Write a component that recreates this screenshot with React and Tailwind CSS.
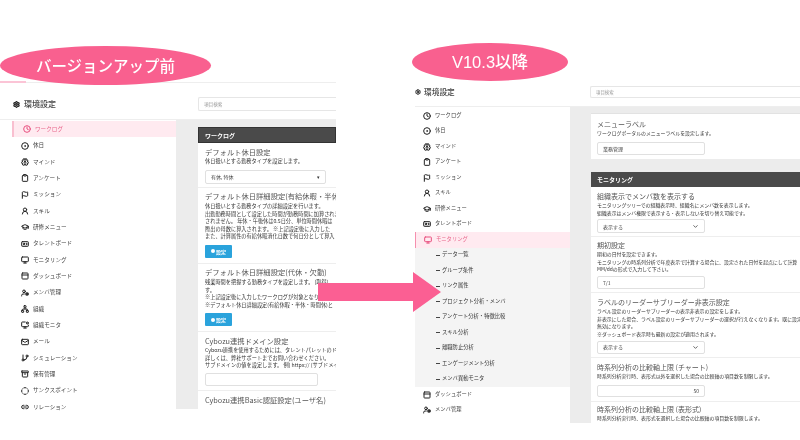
import React from "react";
import { Clock, CircleDot, Brain, Clipboard, Flag, UserRound, GraduationCap, IdCard, Monitor, PanelTop, UserCog, Network, MonitorDot, Mail, GitBranch, Archive, CircleDashed, Link2, Settings, ChevronDown } from "lucide-react";

const font = { fontFamily: '"Noto Sans CJK JP","Noto Sans",sans-serif' };

const items = [
  ["ワークログ", Clock],
  ["休日", CircleDot],
  ["マインド", Brain],
  ["アンケート", Clipboard],
  ["ミッション", Flag],
  ["スキル", UserRound],
  ["研修メニュー", GraduationCap],
  ["タレントボード", IdCard],
  ["モニタリング", Monitor],
  ["ダッシュボード", PanelTop],
  ["メンバ管理", UserCog],
  ["組織", Network],
  ["組織モニタ", MonitorDot],
  ["メール", Mail],
  ["シミュレーション", GitBranch],
  ["保有管理", Archive],
  ["サンクスポイント", CircleDashed],
  ["リレーション", Link2],
];

const subs = ["データ一覧", "グループ条件", "リンク属性", "プロジェクト分析・メンバ", "アンケート分析・特徴比較", "スキル分析", "離職防止分析", "エンゲージメント分析", "メンバ異動モニタ"];

function Title({ children, className = "" }) {
  return <div className={`text-[#555] whitespace-nowrap ${className}`}>{children}</div>;
}

function Desc({ lines, className = "" }) {
  return (
    <div className={`text-[#333] whitespace-nowrap ${className}`}>
      {lines.map((l) => <div key={l}>{l}</div>)}
    </div>
  );
}

function Field({ text = "", select, chevron, right, className = "" }) {
  return (
    <div className={`border border-[#e0e0e0] rounded-[2px] bg-white flex items-center px-[5px] text-[#444] text-[5px] ${className}`}>
      <span className={right ? "ml-auto" : ""}>{text}</span>
      {select && <span className="ml-auto text-[#333] text-[5px]">▾</span>}
      {chevron && <ChevronDown size={7} strokeWidth={3} className="ml-auto text-[#555]" />}
    </div>
  );
}

function SetBtn() {
  return (
    <div className="w-[27px] h-[13px] bg-[#2aa3dc] rounded-[1px] flex items-center justify-center gap-[1px] text-white text-[5px] font-bold">
      <span className="w-[4px] h-[4px] rounded-full bg-white" />設定
    </div>
  );
}

function LeftSidebar() {
  return (
    <div className="w-[176px] shrink-0 pt-[1px] pl-[12px]">
      {items.map(([t, I], i) => (
        <div key={t} className={`h-[16.35px] flex items-center text-[5.6px] pl-[9px] gap-[4px] ${i === 0 ? "bg-[#ffeaf0] border-l-2 border-[#f9bfd0] pl-[7px] text-[#e8678c]" : "text-[#444]"}`}>
          <I size={8} strokeWidth={3} className={i === 0 ? "text-[#e8507f]" : "text-[#222]"} />
          <span>{t}</span>
        </div>
      ))}
    </div>
  );
}

function RightSidebar() {
  const row = (t, I, active) => (
    <div key={t} className={`h-[15.5px] flex items-center text-[5.3px] pl-[8px] gap-[4px] ${active ? "bg-[#ffeaf0] border-l border-[#f58fae] pl-[7px] text-[#e8678c]" : "text-[#444]"}`}>
      <I size={8} strokeWidth={3} className={active ? "text-[#e8507f]" : "text-[#222]"} />
      <span>{t}</span>
    </div>
  );
  return (
    <div className="w-[155px] shrink-0 pt-[1px]">
      {items.slice(0, 8).map(([t, I]) => row(t, I))}
      {row(items[8][0], items[8][1], true)}
      <div className="bg-[#f4f4f4]">
        {subs.map((s) => (
          <div key={s} className="h-[15.5px] flex items-center pl-[21px] gap-[2px] text-[5.3px] text-[#333]">
            <span className="w-[4px] h-[1px] bg-[#444]" />
            <span>{s}</span>
          </div>
        ))}
      </div>
      {row(items[9][0], items[9][1])}
      {row(items[10][0], items[10][1])}
    </div>
  );
}

function LeftContent() {
  return (
    <div className="w-[160px] h-[289px] bg-[#ececec] pl-[22px] pt-[7px] overflow-hidden">
      <div className="h-[16px] bg-[#4a4a4a] border border-[#333] text-white text-[6px] font-bold flex items-center pl-[6px]">ワークログ</div>
      <div className="bg-white h-[270px] text-[5.2px] leading-[7.6px]">
        <div className="h-[45px] pl-[7px] pt-[4px] border-b border-[#eee]">
          <Title className="text-[7.3px] leading-[10px]">デフォルト休日設定</Title>
          <Desc lines={["休日扱いとする勤務タイプを設定します。"]} />
          <Field text="有休, 特休" select className="w-[121px] h-[14px] mt-[5px] mr-[10px]" />
        </div>
        <div className="h-[76px] pl-[7px] pt-[3px] border-b border-[#eee]">
          <Title className="text-[7.3px] leading-[10px]">デフォルト休日詳細設定(有給休暇・半休)</Title>
          <Desc className="pt-[1px]" lines={["休日扱いとする勤務タイプの詳細設定を行います。", "出勤勤務時間として設定した時間が勤務時間に加算されます。", "されません。 年休・午後休は0.5日分、単位時間休暇は", "際出の母数に算入されます。 ※上記設定後に入力した", "また、計算属性の有給休暇消化日数で何日分として算入"]} />
          <div className="mt-[5px]"><SetBtn /></div>
        </div>
        <div className="h-[68px] pl-[7px] pt-[3px] border-b border-[#eee]">
          <Title className="text-[7.3px] leading-[10px]">デフォルト休日詳細設定(代休・欠勤)</Title>
          <Desc className="pt-[1px]" lines={["残業時間を把握する勤務タイプを設定します。 (取得) ", "す。", "※上記設定後に入力したワークログが対象となります。", "※デフォルト休日詳細設定(有給休暇・半休・時間休)と"]} />
          <div className="mt-[5px]"><SetBtn /></div>
        </div>
        <div className="h-[59px] pl-[7px] pt-[4px] border-b border-[#eee]">
          <Title className="text-[7.3px] leading-[10px]">Cybozu連携ドメイン設定</Title>
          <Desc lines={["Cybozu連携を使用するためには、タレントパレットのドメイン", "詳しくは、弊社サポートまでお問い合わせください。", "サブドメインの値を設定します。 例) https:// (サブドメイン)"]} />
          <Field className="w-[113px] h-[13px] mt-[4px]" />
        </div>
        <div className="pl-[7px] pt-[4px]">
          <Title className="text-[7.3px] leading-[10px]">Cybozu連携Basic認証設定(ユーザ名)</Title>
        </div>
      </div>
    </div>
  );
}

function RightContent() {
  return (
    <div className="w-[230px] h-[316px] bg-[#ececec] pl-[21px] pt-[6px] overflow-hidden">
      <div className="h-[46px] bg-white pl-[6px] pt-[5px] text-[4.9px] leading-[8px] border-t border-[#e2e2e2]">
        <Title className="text-[7px] leading-[10px]">メニューラベル</Title>
        <Desc lines={["ワークログポータルのメニューラベルを設定します。"]} />
        <Field text="業務管理" className="w-[108px] h-[13px] mt-[5px]" />
      </div>
      <div className="h-[15px] mt-[13px] bg-[#4a4a4a] text-white text-[6px] font-bold flex items-center pl-[6px]">モニタリング</div>
      <div className="bg-white h-[240px] text-[4.9px] leading-[7.7px]">
        <div className="h-[50px] pl-[6px] pt-[4px] border-b border-[#eee]">
          <Title className="text-[7px] leading-[10px]">組織表示でメンバ数を表示する</Title>
          <Desc lines={["モニタリングツリーでの組織表示時、組織名にメンバ数を表示します。", "組織表示はメンバ権限で表示する・表示しないを切り替え可能です。"]} />
          <Field text="表示する" chevron className="w-[108px] h-[14px] mt-[3px]" />
        </div>
        <div className="h-[56px] pl-[6px] pt-[3px] border-b border-[#eee]">
          <Title className="text-[7px] leading-[10px]">期初設定</Title>
          <Desc lines={["期初の日付を設定できます。", "モニタリングの時系列分析で年度表示で計算する場合に、設定された日付を起点にして計算", "MM/ddの形式で入力して下さい。"]} />
          <Field text="7/1" className="w-[108px] h-[13px] mt-[3px]" />
        </div>
        <div className="h-[65px] pl-[6px] pt-[4px] border-b border-[#eee]">
          <Title className="text-[7px] leading-[10px]">ラベルのリーダーサブリーダー非表示設定</Title>
          <Desc lines={["ラベル設定のリーダーサブリーダーの表示非表示の設定をします。", "非表示にした場合、ラベル設定のリーダーサブリーダーの選択が行えなくなります。既に設定済", "無効になります。", "※ダッシュボード表示時も最新の設定が適用されます。"]} />
          <Field text="表示する" chevron className="w-[108px] h-[13px] mt-[3px]" />
        </div>
        <div className="h-[44px] pl-[6px] pt-[4px] border-b border-[#eee]">
          <Title className="text-[7px] leading-[10px]">時系列分析の比較軸上限 (チャート)</Title>
          <Desc lines={["時系列分析実行時、表形式以外を選択した場合の比較軸の項目数を制限します。"]} />
          <Field text="50" right className="w-[108px] h-[12px] mt-[5px]" />
        </div>
        <div className="pl-[6px] pt-[2px]">
          <Title className="text-[7px] leading-[10px]">時系列分析の比較軸上限 (表形式)</Title>
          <Desc lines={["時系列分析実行時、表形式を選択した場合の比較軸の項目数を制限します。"]} />
        </div>
      </div>
    </div>
  );
}

export default function App() {
  return (
    <div className="relative w-[800px] h-[440px] overflow-hidden bg-white blur-[0.6px]" style={font}>
      <div className="flex items-start">
        <div className="w-[336px] shrink-0 mt-[82px] border-t border-[#eee]">
          <div className="h-[37px] pt-[6px] flex items-center border-b border-[#eee]">
            <div className="w-[198px] flex items-center gap-[4px] pl-[13px] text-[8px] text-[#444] font-medium">
              <Settings size={7} strokeWidth={4} className="text-[#222]" />環境設定
            </div>
            <div className="flex-1 h-[14px] border border-[#e6e6e6] border-r-0 rounded-l-[2px] flex items-center pl-[5px] text-[4.6px] text-[#999]">項目検索</div>
          </div>
          <div className="flex">
            <LeftSidebar />
            <LeftContent />
          </div>
        </div>
        <div className="w-[385px] shrink-0 ml-[79px] mt-[78px]">
          <div className="h-[29px] flex items-center border-b border-[#eee]">
            <div className="w-[175px] flex items-center gap-[3px] text-[7.7px] text-[#444] font-medium">
              <Settings size={6} strokeWidth={4} className="text-[#222]" />環境設定
            </div>
            <div className="flex-1 h-[12px] border border-[#e6e6e6] border-r-0 rounded-l-[2px] flex items-center pl-[5px] text-[4.4px] text-[#999]">項目検索</div>
          </div>
          <div className="flex">
            <RightSidebar />
            <RightContent />
          </div>
        </div>
      </div>

      <div className="absolute left-0 top-[81px] w-[26px] h-[2px] bg-[#fbc4d6]" />
      <div className="absolute left-0 top-[46px] w-[211px] h-[39px] rounded-[50%] bg-[#f9608f] flex items-center justify-center text-white text-[15.5px] font-medium whitespace-nowrap">バージョンアップ前</div>
      <div className="absolute left-[412px] top-[43px] w-[156px] h-[38px] rounded-[50%] bg-[#f9608f] flex items-center justify-center text-white text-[16.5px] font-medium whitespace-nowrap" style={{ fontFamily: '"Liberation Sans","Noto Sans CJK JP",sans-serif' }}>V10.3以降</div>

      <svg className="absolute left-[318px] top-[270px]" width="125" height="44" viewBox="0 0 125 44">
        <path d="M0 13H95V2L123 22L95 42V31H0Z" fill="#fb5f93" />
      </svg>
    </div>
  );
}
